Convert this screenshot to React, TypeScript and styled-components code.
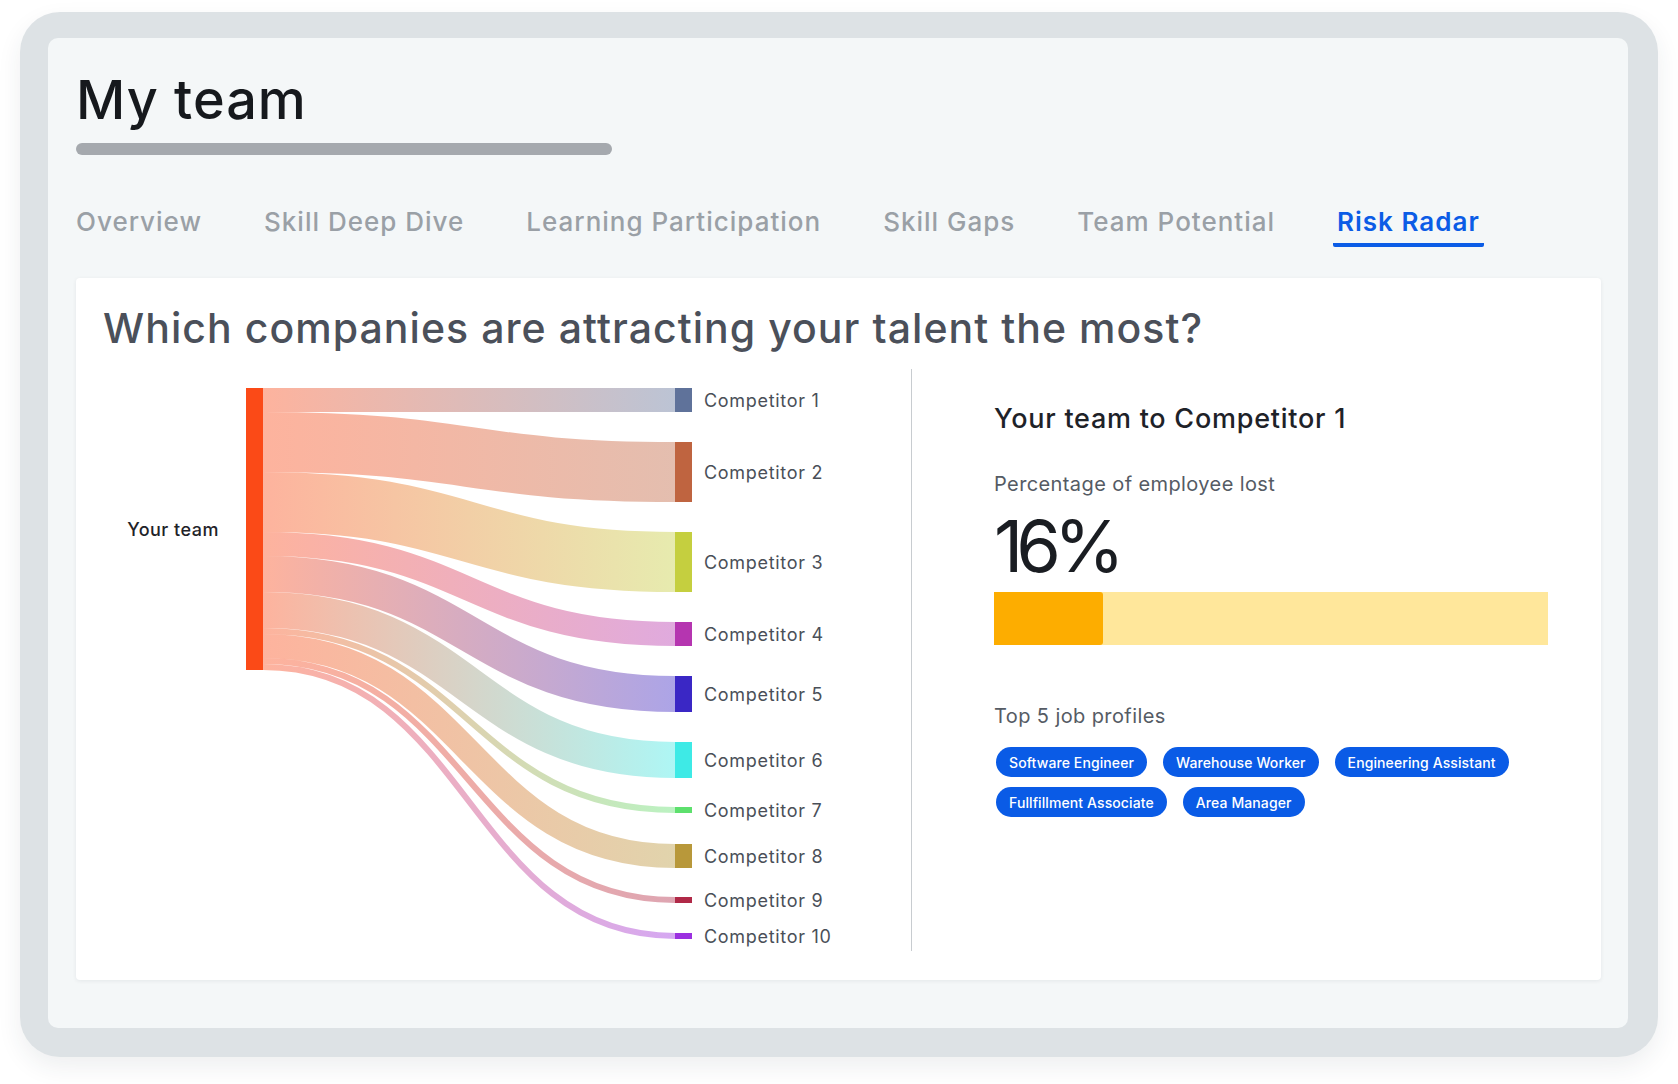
import styled, { createGlobalStyle } from 'styled-components';

const GlobalStyle = createGlobalStyle`
  html, body {
    margin: 0;
    padding: 0;
    background: #ffffff;
  }
  body {
    font-family: Inter, "Noto Sans", sans-serif;
    -webkit-font-smoothing: antialiased;
  }
  * {
    box-sizing: border-box;
  }
`;

// Layout
const Page = styled.div`
  width: 1678px;
  height: 1084px;
  padding: 12px 20px 0 20px;
`;

const Frame = styled.div`
  background: #dde2e5;
  border-radius: 40px;
  padding: 26px 30px 29px 28px;
  box-shadow: 0 10px 24px rgba(40, 50, 60, 0.08);
`;

const Panel = styled.div`
  background: #f4f7f8;
  border-radius: 10px;
  padding: 35px 27px 48px 28px;
`;

const Title = styled.h1`
  margin: 0;
  font-size: 54px;
  font-weight: 500;
  line-height: 1;
  color: #16191d;
  letter-spacing: 1px;
`;

const TitleBar = styled.div`
  margin-top: 16px;
  width: 536px;
  height: 12px;
  border-radius: 6px;
  background: #a5a9ae;
`;

const Tabs = styled.nav`
  display: flex;
  gap: 54px;
  margin: 54px 0 0 -4px;
`;

const Tab = styled.div<{ $active?: boolean }>`
  padding: 0 4px 8px;
  font-size: 26px;
  font-weight: ${(p) => (p.$active ? 600 : 500)};
  line-height: 1;
  letter-spacing: 1px;
  color: ${(p) => (p.$active ? '#0b5ce6' : '#9aa0a6')};
  border-bottom: 4px solid ${(p) => (p.$active ? '#0b5ce6' : 'transparent')};
  border-radius: 0 0 2px 2px;
`;

const Card = styled.section`
  margin-top: 31px;
  background: #ffffff;
  border-radius: 4px;
  padding: 30px 27px 29px;
  box-shadow: 0 1px 4px rgba(20, 30, 40, 0.07);
`;

const Heading = styled.h2`
  margin: 0;
  font-size: 41px;
  font-weight: 500;
  line-height: 1;
  color: #4b505a;
  letter-spacing: 1.05px;
`;

const Body = styled.div`
  display: flex;
  margin-top: 20px;
  height: 582px;
`;

const ChartBox = styled.div`
  width: 808px;
  flex-shrink: 0;
`;

const Divider = styled.div`
  width: 1px;
  background: #c8ccd0;
`;

const Details = styled.div`
  flex: 1;
  display: flex;
  flex-direction: column;
  padding: 36px 0 0 82px;
`;

const DetailTitle = styled.h3`
  margin: 0;
  font-size: 27px;
  font-weight: 500;
  line-height: 1;
  letter-spacing: 0.75px;
  color: #1e2228;
`;

const DetailLabel = styled.div<{ $gap: number }>`
  margin-top: ${(p) => p.$gap}px;
  font-size: 20px;
  line-height: 1;
  letter-spacing: 0.4px;
  color: #555b64;
`;

const BigValue = styled.div`
  margin-top: 16px;
  font-size: 72px;
  font-weight: 400;
  line-height: 1;
  letter-spacing: -7px;
  color: #1a1d22;
`;

const Track = styled.div`
  margin-top: 10px;
  width: 554px;
  height: 53px;
  background: #ffe79b;
`;

const Fill = styled.div`
  height: 100%;
  background: #fdad00;
  border-radius: 0 3px 3px 0;
`;

const Chips = styled.div`
  display: flex;
  flex-wrap: wrap;
  gap: 10px 16px;
  width: 554px;
  margin: 21px 0 0 2px;
`;

const Chip = styled.span`
  display: inline-flex;
  align-items: center;
  height: 30px;
  padding: 0 13px;
  border-radius: 15px;
  background: #0a5be6;
  color: #ffffff;
  font-size: 14px;
  font-weight: 500;
  letter-spacing: 0.1px;
`;

const NodeLabel = styled.text`
  font-family: Inter, "Noto Sans", sans-serif;
  font-size: 18px;
  letter-spacing: 0.7px;
  fill: #4a4f58;
`;

const SourceLabel = styled(NodeLabel)`
  font-weight: 500;
  letter-spacing: 0.5px;
  fill: #1f2329;
`;

// Sankey data (svg coordinates)
const SRC_X0 = 143;
const SRC_X1 = 160;
const TGT_X0 = 572;
const TGT_X1 = 589;
const SRC_COLOR = '#fb4a17';

const competitors = [
  { name: 'Competitor 1', color: '#5f729a', y: 19, h: 24 },
  { name: 'Competitor 2', color: '#bf6440', y: 73, h: 60 },
  { name: 'Competitor 3', color: '#c5cf3f', y: 163, h: 60 },
  { name: 'Competitor 4', color: '#b535b0', y: 253, h: 24 },
  { name: 'Competitor 5', color: '#3a27c5', y: 307, h: 36 },
  { name: 'Competitor 6', color: '#3eeae6', y: 373, h: 36 },
  { name: 'Competitor 7', color: '#5de06d', y: 438, h: 6 },
  { name: 'Competitor 8', color: '#b8983a', y: 475, h: 24 },
  { name: 'Competitor 9', color: '#b02947', y: 528, h: 6 },
  { name: 'Competitor 10', color: '#9b30e0', y: 564, h: 6 },
];

const profiles = [
  'Software Engineer',
  'Warehouse Worker',
  'Engineering Assistant',
  'Fullfillment Associate',
  'Area Manager',
];

const tabs = ['Overview', 'Skill Deep Dive', 'Learning Participation', 'Skill Gaps', 'Team Potential', 'Risk Radar'];

function Sankey() {
  let offset = 19;
  const links = competitors.map((c) => {
    const s = offset + c.h / 2;
    offset += c.h;
    return { ...c, s, t: c.y + c.h / 2 };
  });
  const mid = (SRC_X1 + TGT_X0) / 2;

  return (
    <svg width="808" height="582" viewBox="0 0 808 582">
      <defs>
        {links.map((l, i) => (
          <linearGradient key={i} id={`link-${i}`} gradientUnits="userSpaceOnUse" x1={SRC_X1} x2={TGT_X0} y1="0" y2="0">
            <stop offset="0" stopColor={SRC_COLOR} />
            <stop offset="1" stopColor={l.color} />
          </linearGradient>
        ))}
      </defs>
      {links.map((l, i) => (
        <path
          key={i}
          d={`M${SRC_X1},${l.s} C${mid},${l.s} ${mid},${l.t} ${TGT_X0},${l.t}`}
          fill="none"
          stroke={`url(#link-${i})`}
          strokeWidth={l.h}
          strokeOpacity={0.42}
        />
      ))}
      <rect x={SRC_X0} y={19} width={SRC_X1 - SRC_X0} height={offset - 19} fill={SRC_COLOR} />
      <SourceLabel x={116} y={160} textAnchor="end" dominantBaseline="central">
        Your team
      </SourceLabel>
      {competitors.map((c) => (
        <g key={c.name}>
          <rect x={TGT_X0} y={c.y} width={TGT_X1 - TGT_X0} height={c.h} fill={c.color} />
          <NodeLabel x={601} y={c.y + c.h / 2} dominantBaseline="central">
            {c.name}
          </NodeLabel>
        </g>
      ))}
    </svg>
  );
}

export default function App() {
  const lostShare = 0.197;
  return (
    <>
      <GlobalStyle />
      <Page>
        <Frame>
          <Panel>
            <Title>My team</Title>
            <TitleBar />
            <Tabs>
              {tabs.map((t) => (
                <Tab key={t} $active={t === 'Risk Radar'}>
                  {t}
                </Tab>
              ))}
            </Tabs>
            <Card>
              <Heading>Which companies are attracting your talent the most?</Heading>
              <Body>
                <ChartBox>
                  <Sankey />
                </ChartBox>
                <Divider />
                <Details>
                  <DetailTitle>Your team to Competitor 1</DetailTitle>
                  <DetailLabel $gap={42}>Percentage of employee lost</DetailLabel>
                  <BigValue>16%</BigValue>
                  <Track>
                    <Fill style={{ width: `${lostShare * 100}%` }} />
                  </Track>
                  <DetailLabel $gap={61}>Top 5 job profiles</DetailLabel>
                  <Chips>
                    {profiles.map((p) => (
                      <Chip key={p}>{p}</Chip>
                    ))}
                  </Chips>
                </Details>
              </Body>
            </Card>
          </Panel>
        </Frame>
      </Page>
    </>
  );
}
